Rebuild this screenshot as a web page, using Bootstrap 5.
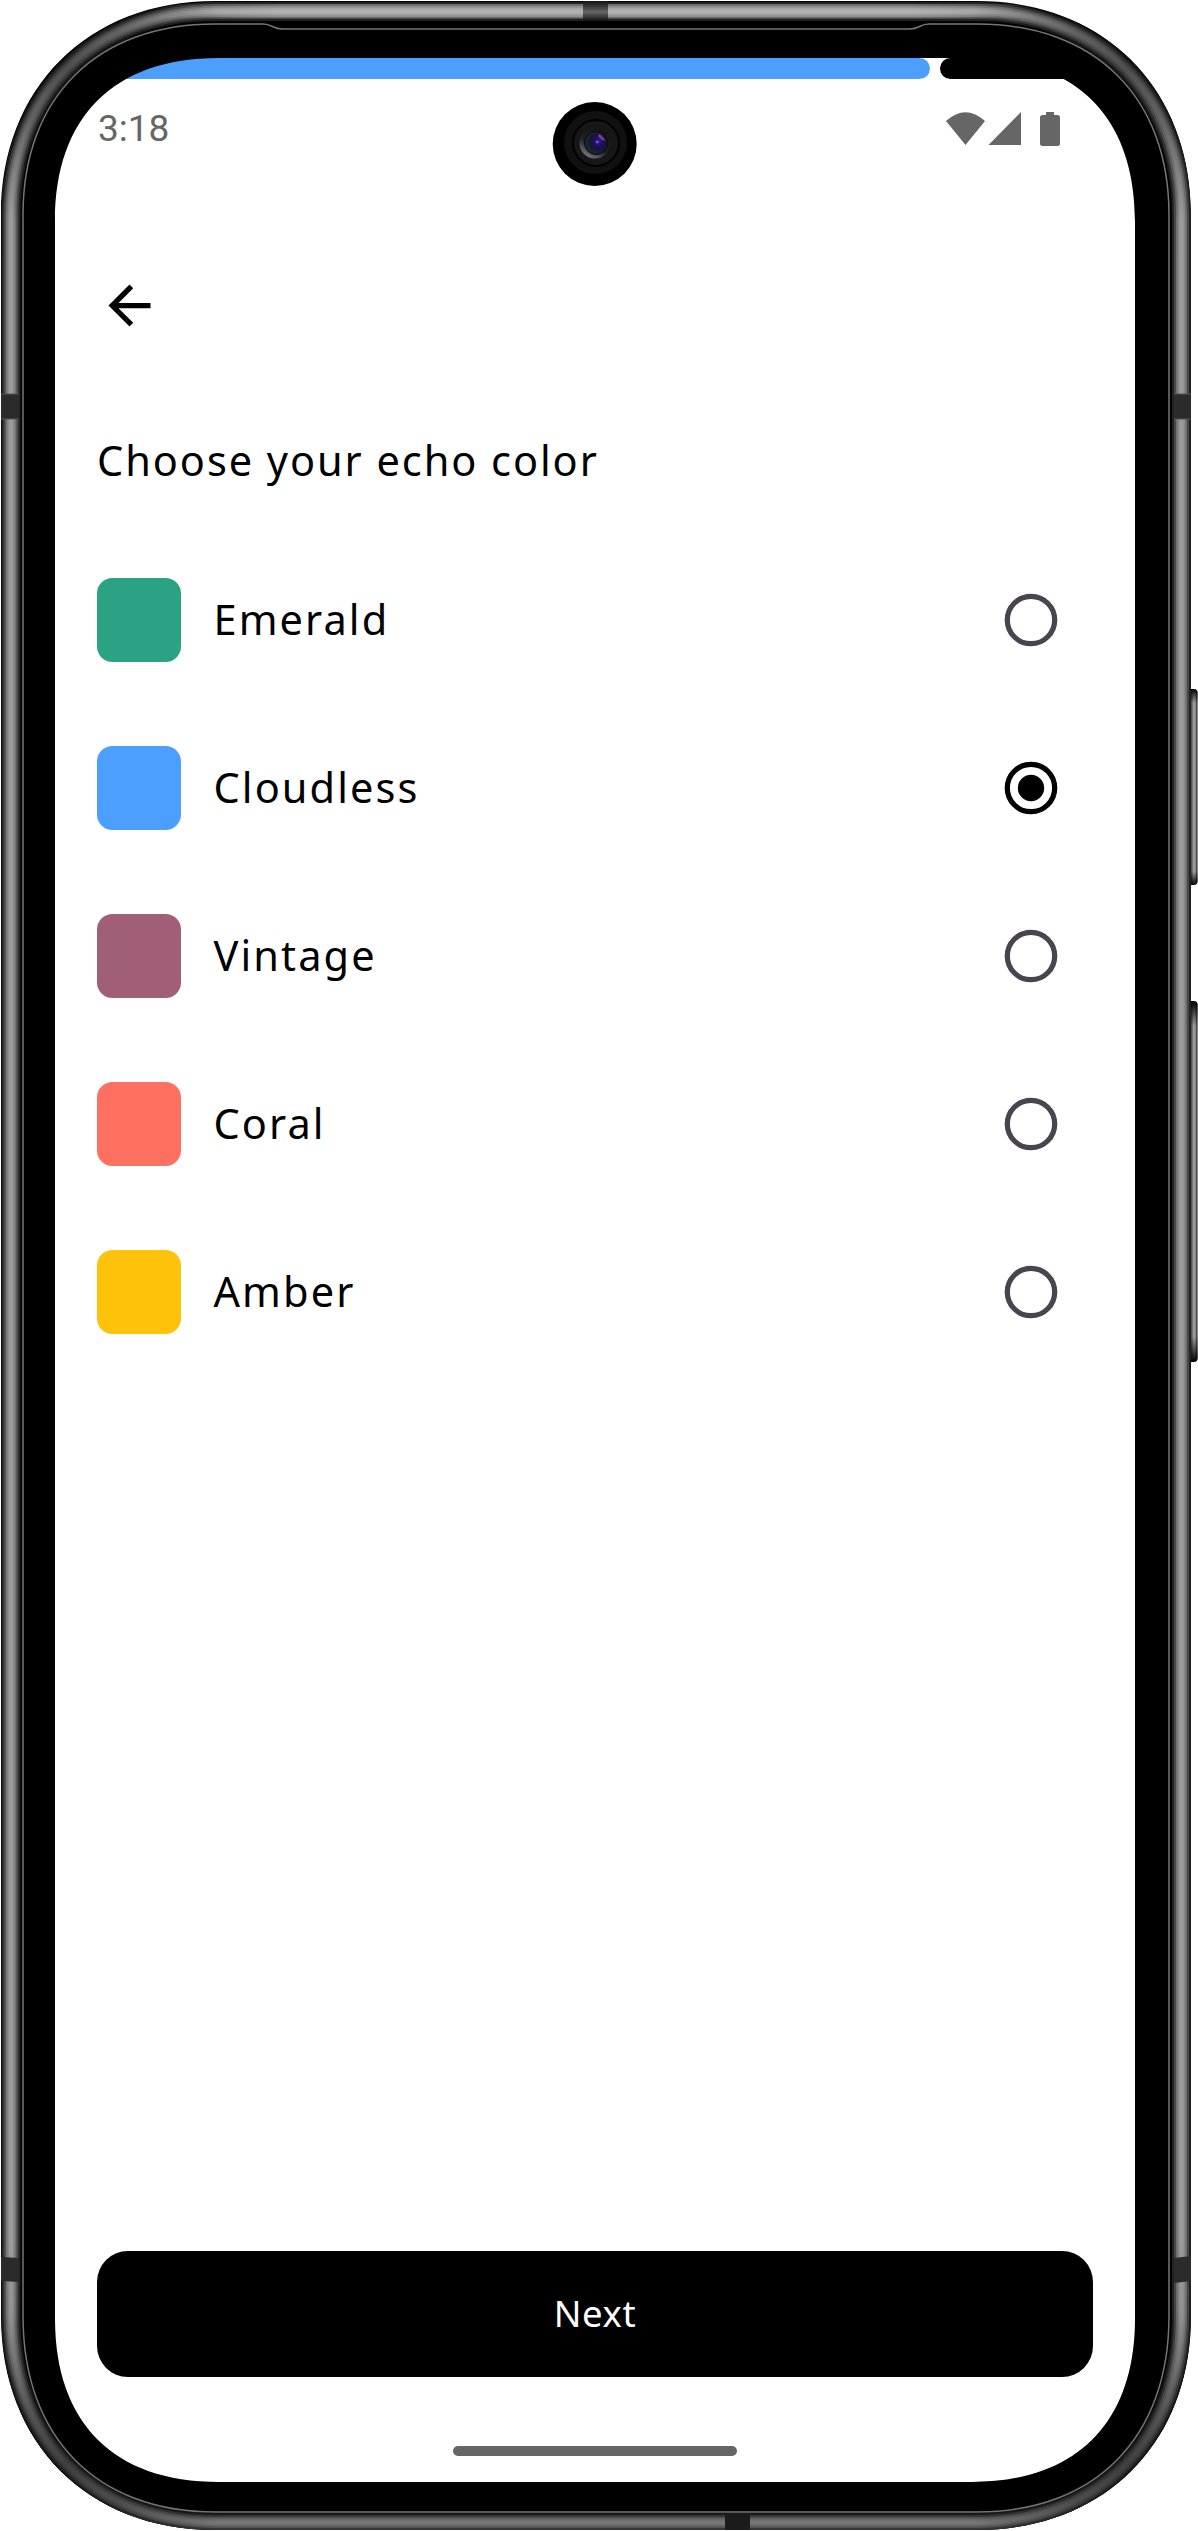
<!DOCTYPE html>
<html lang="en">
<head>
<meta charset="utf-8">
<title>Choose your echo color</title>
<meta name="viewport" content="width=device-width, initial-scale=1">
<link href="https://cdn.jsdelivr.net/npm/bootstrap@5.3.0/dist/css/bootstrap.min.css" rel="stylesheet">
<style>
body{background:#fff;color:#000;font-family:"Noto Sans","Open Sans",sans-serif}
.phone{width:1198px;height:2531px;padding:58px 63px 49px 55px}
.phone-shell{left:0;top:0;z-index:5;pointer-events:none}
.app-screen{height:2424px;background:#fff;border-radius:120px}
.step-track{height:21px;gap:10px}
.step-done{width:875px;background:#4c9eff;border-radius:0 10.5px 10.5px 0}
.step-left{background:#000;border-radius:10.5px 0 0 10.5px}
.status-row{height:84px;padding:0 74px 0 43px;color:#666}
.status-icons{margin-top:32px}
.clock{font:400 37px/84px Roboto,sans-serif;margin-top:8px}
.back-btn{margin:111px 0 0 43px;width:63px;height:63px}
.screen-title{font-size:41.5px;line-height:60px;margin:93px 0 0 42px;letter-spacing:1.95px;font-weight:400}
.color-list{padding:46px 42px 0}
.color-row{height:168px;padding-right:35.5px}
.swatch{width:84px;height:84px;border-radius:15.5px}
.color-name{font-size:41.5px;line-height:60px;margin:0 0 3px 32.5px;letter-spacing:2.1px}
.emerald{background:#2ba283}.cloudless{background:#4c9eff}.vintage{background:#a15e78}.coral{background:#ff7061}.amber{background:#ffc20a}
.next-btn{height:126px;margin:0 42px 69px;border-radius:31px;background:#000!important;font-size:36.5px;border:0;letter-spacing:.6px}
.next-btn span{display:block;margin-bottom:2px}
.home-pill{width:284px;height:10px;border-radius:5px;background:#666;margin-bottom:26px}
</style>
<script src="https://cdn.jsdelivr.net/npm/bootstrap@5.3.0/dist/js/bootstrap.bundle.min.js"></script>
</head>
<body>
<div class="phone position-relative overflow-hidden">
<main class="app-screen d-flex flex-column overflow-hidden">
  <div class="step-track d-flex"><div class="step-done flex-shrink-0"></div><div class="step-left flex-grow-1"></div></div>
  <header class="status-row d-flex justify-content-between align-items-start">
    <span class="clock">3:18</span>
    <svg class="status-icons" width="116" height="36" viewBox="945 111 116 36" fill="#666"><path d="M946 121Q965.5 103.500 985 121L965.500 145ZM988.500 145L1021 112V145ZM1046 112h8v3h3.500q2.500 0 2.500 2.500v26q0 2.500-2.500 2.500h-15q-2.500 0-2.500-2.500v-26q0-2.500 2.500-2.500h3.500z"/></svg>
  </header>
  <button class="back-btn btn p-0 border-0 d-flex flex-shrink-0" aria-label="Back"><svg width="63" height="63" viewBox="0 0 24 24"><path d="M20 11H7.830l5.590-5.590L12 4l-8 8 8 8 1.410-1.410L7.830 13H20z"/></svg></button>
  <h1 class="screen-title">Choose your echo color</h1>
  <section class="color-list">
    <label class="color-row d-flex align-items-center"><span class="swatch emerald"></span><span class="color-name">Emerald</span><svg class="ms-auto" width="54" height="54"><circle cx="27" cy="27" r="23.700" fill="none" stroke="#49454f" stroke-width="5.250"/></svg></label>
    <label class="color-row d-flex align-items-center"><span class="swatch cloudless"></span><span class="color-name">Cloudless</span><svg class="ms-auto" width="54" height="54"><circle cx="27" cy="27" r="23.700" fill="none" stroke="#000" stroke-width="5.250"/><circle cx="27" cy="27" r="13.200"/></svg></label>
    <label class="color-row d-flex align-items-center"><span class="swatch vintage"></span><span class="color-name">Vintage</span><svg class="ms-auto" width="54" height="54"><circle cx="27" cy="27" r="23.700" fill="none" stroke="#49454f" stroke-width="5.250"/></svg></label>
    <label class="color-row d-flex align-items-center"><span class="swatch coral"></span><span class="color-name">Coral</span><svg class="ms-auto" width="54" height="54"><circle cx="27" cy="27" r="23.700" fill="none" stroke="#49454f" stroke-width="5.250"/></svg></label>
    <label class="color-row d-flex align-items-center"><span class="swatch amber"></span><span class="color-name">Amber</span><svg class="ms-auto" width="54" height="54"><circle cx="27" cy="27" r="23.700" fill="none" stroke="#49454f" stroke-width="5.250"/></svg></label>
  </section>
  <button class="next-btn btn btn-dark mt-auto p-0 flex-shrink-0"><span>Next</span></button>
  <div class="home-pill align-self-center flex-shrink-0"></div>
</main>
<svg class="phone-shell position-absolute" width="1198" height="2531" viewBox="0 0 1198 2531">
<defs>
<linearGradient id="key"><stop offset="0" stop-color="#222"/><stop offset=".5" stop-color="#555"/><stop offset=".65" stop-color="#999"/><stop offset=".8" stop-color="#999"/><stop offset="1" stop-color="#111"/></linearGradient>
<linearGradient id="keyEnds" x1="0" y1="0" x2="0" y2="1"><stop offset="0" stop-color="#000"/><stop offset=".07" stop-color="#000" stop-opacity="0"/><stop offset=".93" stop-color="#000" stop-opacity="0"/><stop offset="1" stop-color="#000"/></linearGradient>
<radialGradient id="dim"><stop offset="0" stop-color="#000" stop-opacity=".5"/><stop offset=".4" stop-color="#000" stop-opacity=".36"/><stop offset="1" stop-color="#000" stop-opacity="0"/></radialGradient>
<linearGradient id="low" x1="0" y1="0" x2="0" y2="1"><stop offset="0" stop-color="#000" stop-opacity="0"/><stop offset="1" stop-color="#000" stop-opacity=".25"/></linearGradient>
<linearGradient id="shine"><stop offset="0" stop-color="#fff" stop-opacity="0"/><stop offset=".15" stop-color="#fff" stop-opacity=".22"/><stop offset=".85" stop-color="#fff" stop-opacity=".22"/><stop offset="1" stop-color="#fff" stop-opacity="0"/></linearGradient>
<linearGradient id="bandV" x1="0" y1="0" x2="0" y2="1"><stop offset="0" stop-color="#111"/><stop offset=".55" stop-color="#666"/><stop offset="1" stop-color="#111"/></linearGradient>
<radialGradient id="lens" cx=".6" cy=".45"><stop offset="0" stop-color="#3c2bb8"/><stop offset=".3" stop-color="#22106b"/><stop offset=".65" stop-color="#1b1238"/><stop offset="1" stop-color="#142932"/></radialGradient>
<linearGradient id="rim" x1=".2" y1="1" x2=".8" y2="0"><stop offset="0" stop-color="#888"/><stop offset=".4" stop-color="#222"/><stop offset="1" stop-color="#111"/></linearGradient>
<path id="ring" d="M11 215C11 94 94 11.500 215 11.500H977C1098 11.500 1181.500 94 1181.500 215V2316C1181.500 2440 1098 2522.500 977 2522.500H215C94 2522.500 11 2440 11 2316Z"/>
<clipPath id="frameOnly"><path clip-rule="evenodd" d="M1 215C1 88 88 1 215 1H977C1104 1 1191 88 1191 215V2316C1191 2443 1104 2530 977 2530H215C88 2530 1 2443 1 2316ZM55 221C55 117 114 58 218 58H972C1076 58 1135 117 1135 221V2319C1135 2423 1076 2482 972 2482H218C114 2482 55 2423 55 2319Z"/></clipPath>
</defs>
<rect x="1186" y="689" width="11.500" height="196" rx="4" fill="url(#key)"/><rect x="1186" y="689" width="11.500" height="196" rx="4" fill="url(#keyEnds)"/>
<rect x="1186" y="1001" width="11.500" height="361" rx="4" fill="url(#key)"/><rect x="1186" y="1001" width="11.500" height="361" rx="4" fill="url(#keyEnds)"/>
<g clip-path="url(#frameOnly)">
 <rect width="1192" height="2531"/>
 <g fill="none"><use href="#ring" stroke="#222" stroke-width="19"/><use href="#ring" stroke="#484848" stroke-width="15"/><use href="#ring" stroke="#707070" stroke-width="11"/><use href="#ring" stroke="#8a8a8a" stroke-width="7.500"/><use href="#ring" stroke="#9b9b9b" stroke-width="4"/></g>
 <path d="M150 4H1042V18H150z" fill="url(#shine)"/>
 <circle cx="62" cy="62" r="165" fill="url(#dim)"/><circle cx="1130" cy="62" r="165" fill="url(#dim)"/><circle cx="62" cy="2469" r="165" fill="url(#dim)"/><circle cx="1130" cy="2469" r="165" fill="url(#dim)"/>
 <rect y="2240" width="1192" height="291" fill="url(#low)"/>
 <path d="M583 1h25v20h-25z" fill="url(#bandV)"/><path d="M725 2514h25v16h-25z" fill="#1b1b1b"/>
 <path d="M1 394h18v25H1zM1174 394h18v25h-18zM1 2257l18 1v24l-18-1zM1174 2258l18-2v25l-18 2z" fill="#2b2b2b"/>
 <path d="M1 394h18M1 419h18M1174 394h18M1174 419h18" stroke="#555" fill="none"/>
</g>
<path d="M23 215C23 97 97 24 215 24H263C272 24 273 29 282 29H910C919 29 920 24 929 24H977C1095 24 1169 97 1169 215V2316C1169 2438 1095 2512 977 2512H215C97 2512 23 2438 23 2316Z" fill="none" stroke="#757575" stroke-width="1.500"/>
<circle cx="594.700" cy="144" r="42"/><circle cx="595.500" cy="142.500" r="31.500" fill="#111"/><circle cx="596" cy="143" r="23" fill="#171717" stroke="#020202" stroke-width="2"/><circle cx="595" cy="143" r="15.500" fill="url(#rim)"/><circle cx="596" cy="143" r="11.500" fill="url(#lens)" stroke="#08080c"/><path d="M599 134a11 11 0 0 1 6 7q-5-1-7-5z" fill="#a45dac" opacity=".6"/><circle cx="597" cy="142" r="1.200" fill="#6a63e8"/>
</svg>
</div>
</body>
</html>
